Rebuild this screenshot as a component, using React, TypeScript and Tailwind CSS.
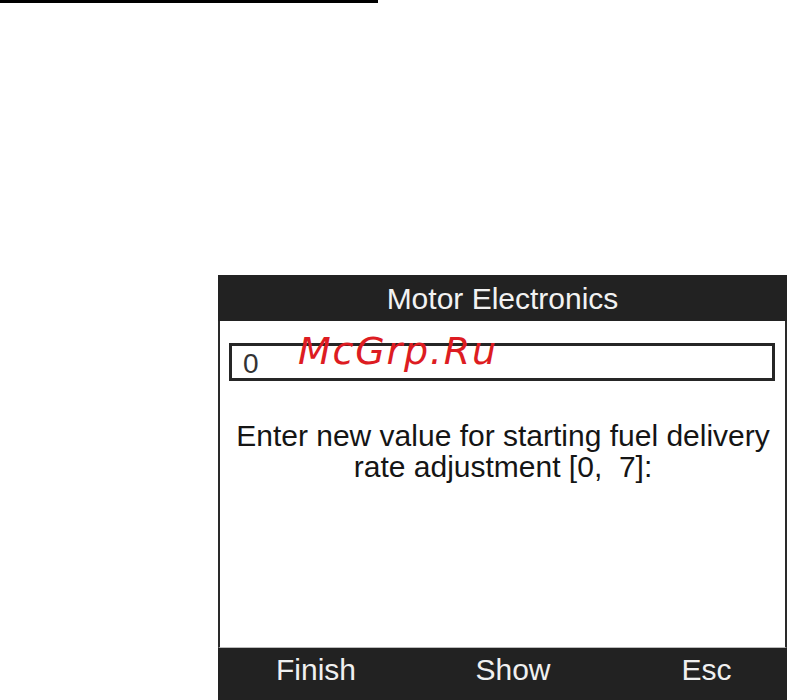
import React from "react";

export default function App() {
  return (
    <div className="relative w-[787px] h-[700px] overflow-hidden bg-white" style={{ fontFamily: '"Liberation Sans", Arial, sans-serif' }}>
      <div className="h-[3px] w-[378px] bg-black" />
      <div className="relative ml-[218px] mt-[272px] w-[569px] flex flex-col">
        <div className="h-[46px] bg-[#222222] flex items-center justify-center text-[30px] leading-none text-[#f2f2f2] pt-[2px]">
          Motor Electronics
        </div>
        <div className="h-[327px] bg-white border-x-2 border-[#2a2a2a] border-b border-b-[#bbbbbb] pt-[22px] pl-[9px] pr-[10px] flex flex-col">
          <div className="h-[38px] w-[546px] border-[3px] border-[#262626] flex items-center pl-[11px] text-[28px] leading-none text-[#333333] pt-[3px]">
            0
          </div>
          <p className="mt-[39px] text-center text-[30px] leading-[31px] text-[#151515] pl-[2px]">
            Enter new value for starting fuel delivery
            <br />
            rate adjustment [0,&nbsp; 7]:
          </p>
        </div>
        <div className="h-[52px] bg-[#222222] flex items-start pt-[4px] text-[30px] leading-[36px] text-[#f0f0f0]">
          <div className="w-[196px] text-center">Finish</div>
          <div className="w-[198px] text-center">Show</div>
          <div className="flex-1 text-center pl-[14px]">Esc</div>
        </div>
        <div
          className="absolute left-[80px] top-[57px] text-[38px] leading-[38px] italic text-[#dd1c22] tracking-[1.8px]"
          style={{ fontFamily: '"DejaVu Sans", sans-serif' }}
        >
          McGrp.Ru
        </div>
      </div>
    </div>
  );
}
